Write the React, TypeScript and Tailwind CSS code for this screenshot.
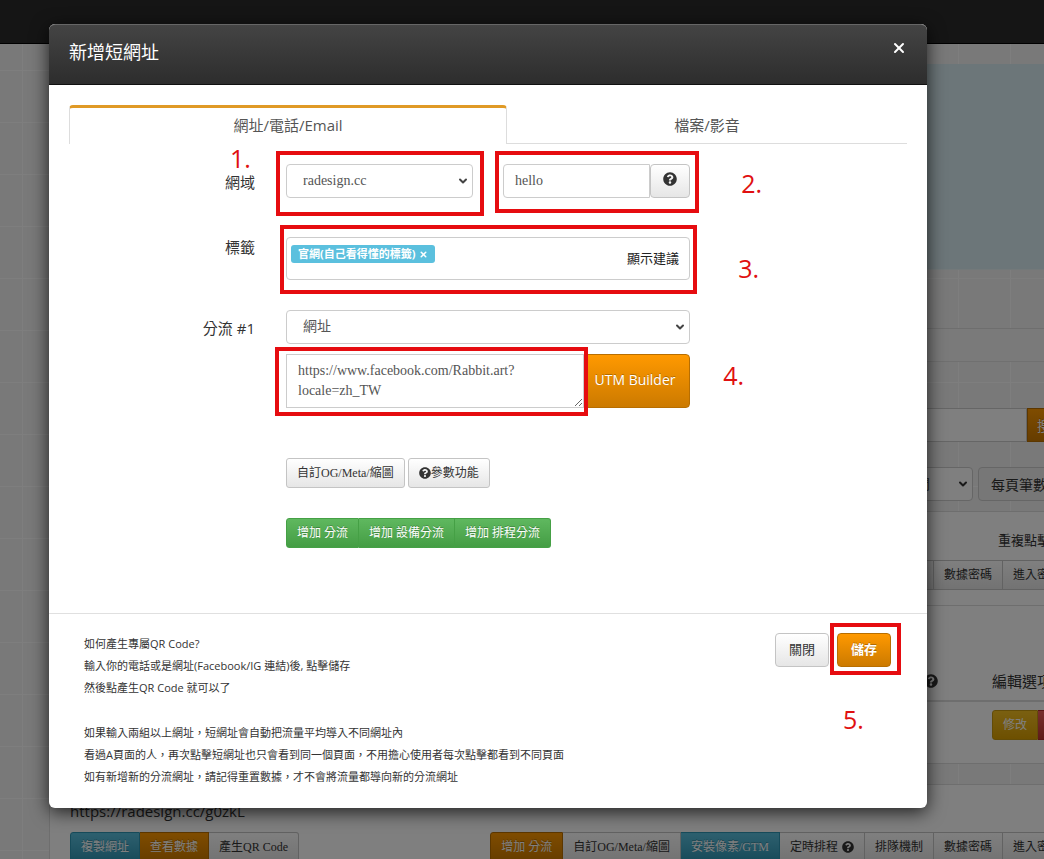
import type { ReactNode } from 'react';
import { ChevronDown, X } from 'lucide-react';
import { FaQuestionCircle } from 'react-icons/fa';

const SANS = "font-['Open_Sans','Noto_Sans_CJK_TC',sans-serif]";
const SERIF = "font-['Liberation_Serif','Noto_Sans_CJK_TC',serif]";

const DEFAULT_BTN = 'border-[#c4c4c4] bg-linear-to-b from-white to-[#e6e6e6] text-[#333]';
const ORANGE_BTN =
  'border-[#b86e00] bg-linear-to-b from-[#ff9900] to-[#cc7a00] text-white text-shadow-[0_-1px_0_rgba(0,0,0,0.25)]';
const GREEN_BTN =
  'border-[#45a045] bg-linear-to-b from-[#5fb85f] to-[#449d44] text-white text-shadow-[0_-1px_0_rgba(0,0,0,0.25)]';
const BLUE_BTN =
  'border-[#2f96b4] bg-linear-to-b from-[#5bc0de] to-[#2f96b4] text-white text-shadow-[0_-1px_0_rgba(0,0,0,0.25)]';

const GRID =
  'bg-[#f3f3f3] bg-[linear-gradient(to_right,#fcfcfc_1px,transparent_1px),linear-gradient(to_bottom,#fcfcfc_1px,transparent_1px)] bg-size-[52px_52px] bg-position-[22px_18px]';

interface GroupItem {
  label: string;
  tone: string;
  help?: boolean;
}

// Row of small buttons joined at their edges
function ButtonGroup({ items }: { items: GroupItem[] }) {
  return (
    <div className={`flex ${SERIF}`}>
      {items.map((item) => (
        <button
          key={item.label}
          type="button"
          className={`flex h-[30px] shrink-0 items-center gap-1 border border-l-0 px-[10px] text-[12px] leading-[18px] whitespace-nowrap first:rounded-l-[3px] first:border-l last:rounded-r-[3px] ${item.tone}`}
        >
          {item.label}
          {item.help && <FaQuestionCircle className="size-3" />}
        </button>
      ))}
    </div>
  );
}

// Red frame drawn over a control to point it out
function Highlight({ className }: { className: string }) {
  return <div className={`pointer-events-none absolute border-4 border-[#e60c10] ${className}`} />;
}

function Step({ n, className }: { n: number; className: string }) {
  return (
    <span className={`absolute text-[25px] leading-[22px] text-[#e01010] ${className}`}>{n}.</span>
  );
}

function Select({ id, value, className = '' }: { id: string; value: string; className?: string }) {
  return (
    <div className={`relative ${className}`}>
      <select
        id={id}
        className={`h-[34px] w-full appearance-none rounded border border-[#ccc] bg-white px-4 text-[14px] leading-[20px] text-[#555] ${SERIF}`}
      >
        <option>{value}</option>
      </select>
      <ChevronDown
        className="pointer-events-none absolute top-[11px] right-1 size-3 text-[#444]"
        strokeWidth={4}
      />
    </div>
  );
}

function Field({ id, label, children }: { id: string; label: string; children: ReactNode }) {
  return (
    <div className="flex gap-[31px]">
      <label htmlFor={id} className="w-[186px] shrink-0 pt-2 text-right text-[15px] leading-[20px]">
        {label}
      </label>
      <div className="w-[404px]">{children}</div>
    </div>
  );
}

const ROW_ACTIONS: GroupItem[] = [
  { label: '增加 分流', tone: ORANGE_BTN },
  { label: '自訂OG/Meta/縮圖', tone: DEFAULT_BTN },
  { label: '安裝像素/GTM', tone: BLUE_BTN },
  { label: '定時排程', tone: DEFAULT_BTN, help: true },
  { label: '排隊機制', tone: DEFAULT_BTN },
  { label: '數據密碼', tone: DEFAULT_BTN },
  { label: '進入密碼', tone: DEFAULT_BTN },
];

function Dashboard() {
  return (
    <div className="h-screen overflow-hidden">
      <nav className="h-[44px] border-b border-black bg-[#2a2a2a]" />
      <main className="-mr-12 pl-[49px]">
        <section className="mt-5 h-[206px] border-b border-[#e6f2f5] bg-[#d9edf2]" />
        <section className="mt-2 h-[50px] border-t border-[#fbfbfb]" />
        <section className="h-[34px] border-t border-b border-t-[#ddd] border-b-[#e0e0e0] bg-[#f5f5f5]" />

        <form className="mt-[46px] flex pr-[31px]">
          <input
            aria-label="搜尋"
            className="h-[34px] min-w-0 grow border border-[#ccc] bg-white px-3 text-[14px]"
          />
          <button type="button" className={`h-[34px] w-[34px] border px-2 text-[14px] ${ORANGE_BTN}`}>
            搜
          </button>
        </form>
        <div className={`mt-[25px] flex justify-end gap-[5px] text-[14px] ${SERIF}`}>
          <div className="relative">
            <select
              aria-label="排序"
              className="h-[34px] w-[187px] appearance-none rounded border border-[#ccc] bg-white pr-[42px] text-right text-[#555]"
            >
              <option>建立時間</option>
            </select>
            <ChevronDown className="absolute top-[11px] right-1 size-3" strokeWidth={4} />
          </div>
          <div className={`flex h-[34px] w-[114px] items-center rounded border border-[#ccc] bg-[#eee] px-3 ${SANS}`}>
            每頁筆數
          </div>
        </div>

        <section className="mt-[10px] flex flex-col items-end gap-[10px] border-y border-[#ddd] bg-white py-[18px] pr-5 pb-[15px]">
          <p className="w-[74px] text-[13px] leading-[20px]">重複點擊</p>
          <ButtonGroup items={ROW_ACTIONS} />
        </section>

        <section className="border-b border-[#ddd] bg-white">
          <div className="flex h-[96px] items-end justify-end gap-[54px] border-b-2 border-[#ddd] pr-[40px] pb-2 text-[15px] leading-[22px]">
            <FaQuestionCircle className="mb-1 size-[14px]" />
            <span>編輯選項</span>
          </div>
          <div className="flex justify-end pt-2 pr-[9px] pb-[23px]">
            <ButtonGroup
              items={[
                { label: '修改', tone: 'border-[#c79810] bg-linear-to-b from-[#f5c021] to-[#dba000] text-white' },
                { label: '刪除', tone: 'border-[#b02a2a] bg-linear-to-b from-[#ee5f5b] to-[#bd362f] text-white' },
              ]}
            />
          </div>
        </section>

        <section className="mt-5 border-t border-l border-[#ddd] bg-white px-5 pt-4">
          <a href="#g0zkL" className="block text-[15px] leading-[20px]">
            https://radesign.cc/g0zkL
          </a>
          <div className="mt-[11px] flex justify-between">
            <ButtonGroup
              items={[
                { label: '複製網址', tone: BLUE_BTN },
                { label: '查看數據', tone: ORANGE_BTN },
                { label: '產生QR Code', tone: DEFAULT_BTN },
              ]}
            />
            <ButtonGroup items={ROW_ACTIONS} />
          </div>
        </section>
      </main>
    </div>
  );
}

function ShortUrlModal() {
  return (
    <div
      role="dialog"
      aria-labelledby="modal-title"
      className="rounded-md bg-white text-[#333] shadow-[0_4px_18px_rgba(0,0,0,0.75)]"
    >
      <header className="flex h-[61px] justify-between rounded-t-md border-t border-b border-t-[#666] border-b-[#111] bg-linear-to-b from-[#444] to-[#2d2d2d] pr-5 pl-5 text-white">
        <h1 id="modal-title" className="pt-[15px] text-[18px] leading-[24px]">
          新增短網址
        </h1>
        <button type="button" aria-label="關閉" className="mt-[15px] h-4">
          <X className="size-4" strokeWidth={3} />
        </button>
      </header>

      <div className="px-5 pt-5 pb-[65px]">
        <div role="tablist" className="flex text-[15px] text-[#555]">
          <button
            type="button"
            role="tab"
            aria-selected="true"
            className="h-[39px] w-[438px] shrink rounded-t border-x border-t-[3px] border-x-[#ddd] border-t-[#e09a26] pb-[2px]"
          >
            網址/電話/Email
          </button>
          <button type="button" role="tab" aria-selected="false" className="h-[39px] grow border-b border-[#ddd] pt-[3px]">
            檔案/影音
          </button>
        </div>

        <form className="pt-5">
          <Field id="domain" label="網域">
            <div className="flex gap-[30px]">
              <div className="relative">
                <Select id="domain" value="radesign.cc" className="w-[187px]" />
                <Highlight className="-top-[13px] -right-[11px] -bottom-[18px] -left-[10px]" />
                <Step n={1} className="-top-[17px] -left-[56px]" />
              </div>
              <div className="relative flex">
                <input
                  aria-label="短網址"
                  defaultValue="hello"
                  className={`h-[34px] w-[147px] rounded-l border border-[#ccc] px-[11px] text-[14px] text-[#555] ${SERIF}`}
                />
                <button
                  type="button"
                  aria-label="說明"
                  className={`flex h-[34px] w-[40px] items-center justify-center rounded border pb-1 ${DEFAULT_BTN}`}
                >
                  <FaQuestionCircle className="size-[14px]" />
                </button>
                <Highlight className="-top-[13px] -right-[9px] -bottom-[15px] -left-2" />
                <Step n={2} className="top-2 -right-[72px]" />
              </div>
            </div>
          </Field>

          <div className="flex gap-[31px] pt-[39px]">
            <label htmlFor="tags" className="w-[186px] shrink-0 text-right text-[15px] leading-[20px]">
              標籤
            </label>
            <div className="relative flex h-[43px] w-[404px] items-start justify-between rounded border border-[#ccc] pt-[7px] pr-[10px] pl-1">
              <span className="flex h-[18px] shrink-0 items-center gap-1 rounded-[3px] bg-[#5bc0de] px-[7px] text-[11px] font-bold whitespace-nowrap text-white">
                官網(自己看得懂的標籤)
                <button type="button" aria-label="移除標籤">
                  <X className="size-[9px]" strokeWidth={4} />
                </button>
              </span>
              <input id="tags" className="h-7 w-10 min-w-0 grow outline-none" />
              <button type="button" className="pt-[3px] text-[13px] leading-[20px] text-[#222]">
                顯示建議
              </button>
              <Highlight className="-top-[13px] -right-2 -bottom-[15px] -left-[7px]" />
              <Step n={3} className="top-[19px] -right-[70px]" />
            </div>
          </div>

          <div className="pt-[30px]">
            <Field id="target" label="分流 #1">
              <Select id="target" value="網址" />
              <div className="relative mt-[10px] flex">
                <textarea
                  aria-label="目標網址"
                  defaultValue="https://www.facebook.com/Rabbit.art?locale=zh_TW"
                  className={`h-[54px] w-[298px] resize border border-[#ccc] px-[11px] py-[6px] text-[14px] leading-[20px] text-[#555] ${SERIF}`}
                />
                <button
                  type="button"
                  className={`h-[54px] grow rounded-r border pr-1 pb-1 text-[14px] whitespace-nowrap ${ORANGE_BTN}`}
                >
                  UTM Builder
                </button>
                <Highlight className="-top-[7px] right-[102px] -bottom-2 -left-[11px]" />
                <Step n={4} className="top-[10px] -right-[54px]" />
              </div>

              <div className="mt-[50px] flex gap-[3px]">
                <ButtonGroup items={[{ label: '自訂OG/Meta/縮圖', tone: DEFAULT_BTN }]} />
                <button
                  type="button"
                  className={`flex h-[30px] items-center rounded-[3px] border px-[10px] text-[12px] leading-[18px] ${DEFAULT_BTN}`}
                >
                  <FaQuestionCircle className="size-3" />
                  參數功能
                </button>
              </div>

              <div className="mt-[30px]">
                <ButtonGroup
                  items={[
                    { label: '增加 分流', tone: GREEN_BTN },
                    { label: '增加 設備分流', tone: GREEN_BTN },
                    { label: '增加 排程分流', tone: GREEN_BTN },
                  ]}
                />
              </div>
            </Field>
          </div>
        </form>
      </div>

      <footer className="flex items-start justify-between border-t border-[#e0e0e0] pt-[19px] pr-[36px] pb-5 pl-[35px]">
        <div className="flex flex-col gap-[23px] text-[11px] leading-[22px]">
          <p>
            如何產生專屬QR Code?
            <br />
            輸入你的電話或是網址(Facebook/IG 連結)後, 點擊儲存
            <br />
            然後點產生QR Code 就可以了
          </p>
          <p>
            如果輸入兩組以上網址，短網址會自動把流量平均導入不同網址內
            <br />
            看過A頁面的人，再次點擊短網址也只會看到同一個頁面，不用擔心使用者每次點擊都看到不同頁面
            <br />
            如有新增新的分流網址，請記得重置數據，才不會將流量都導向新的分流網址
          </p>
        </div>
        <div className="flex shrink-0 gap-2 text-[13px] leading-[20px]">
          <button type="button" className={`h-[34px] w-[54px] rounded border pb-[2px] ${DEFAULT_BTN}`}>
            關閉
          </button>
          <div className="relative">
            <button type="button" className={`h-[34px] w-[54px] rounded border pb-[2px] font-bold ${ORANGE_BTN}`}>
              儲存
            </button>
            <Highlight className="-top-[10px] -right-[10px] -bottom-2 -left-[7px]" />
            <Step n={5} className="top-[75px] left-[6px]" />
          </div>
        </div>
      </footer>
    </div>
  );
}

export default function App() {
  return (
    <div className={`relative text-[#333] ${SANS} ${GRID}`}>
      <Dashboard />
      <div className="absolute inset-0 overflow-auto bg-black/50 pt-6 pr-[117px] pl-[49px]">
        <ShortUrlModal />
      </div>
    </div>
  );
}
